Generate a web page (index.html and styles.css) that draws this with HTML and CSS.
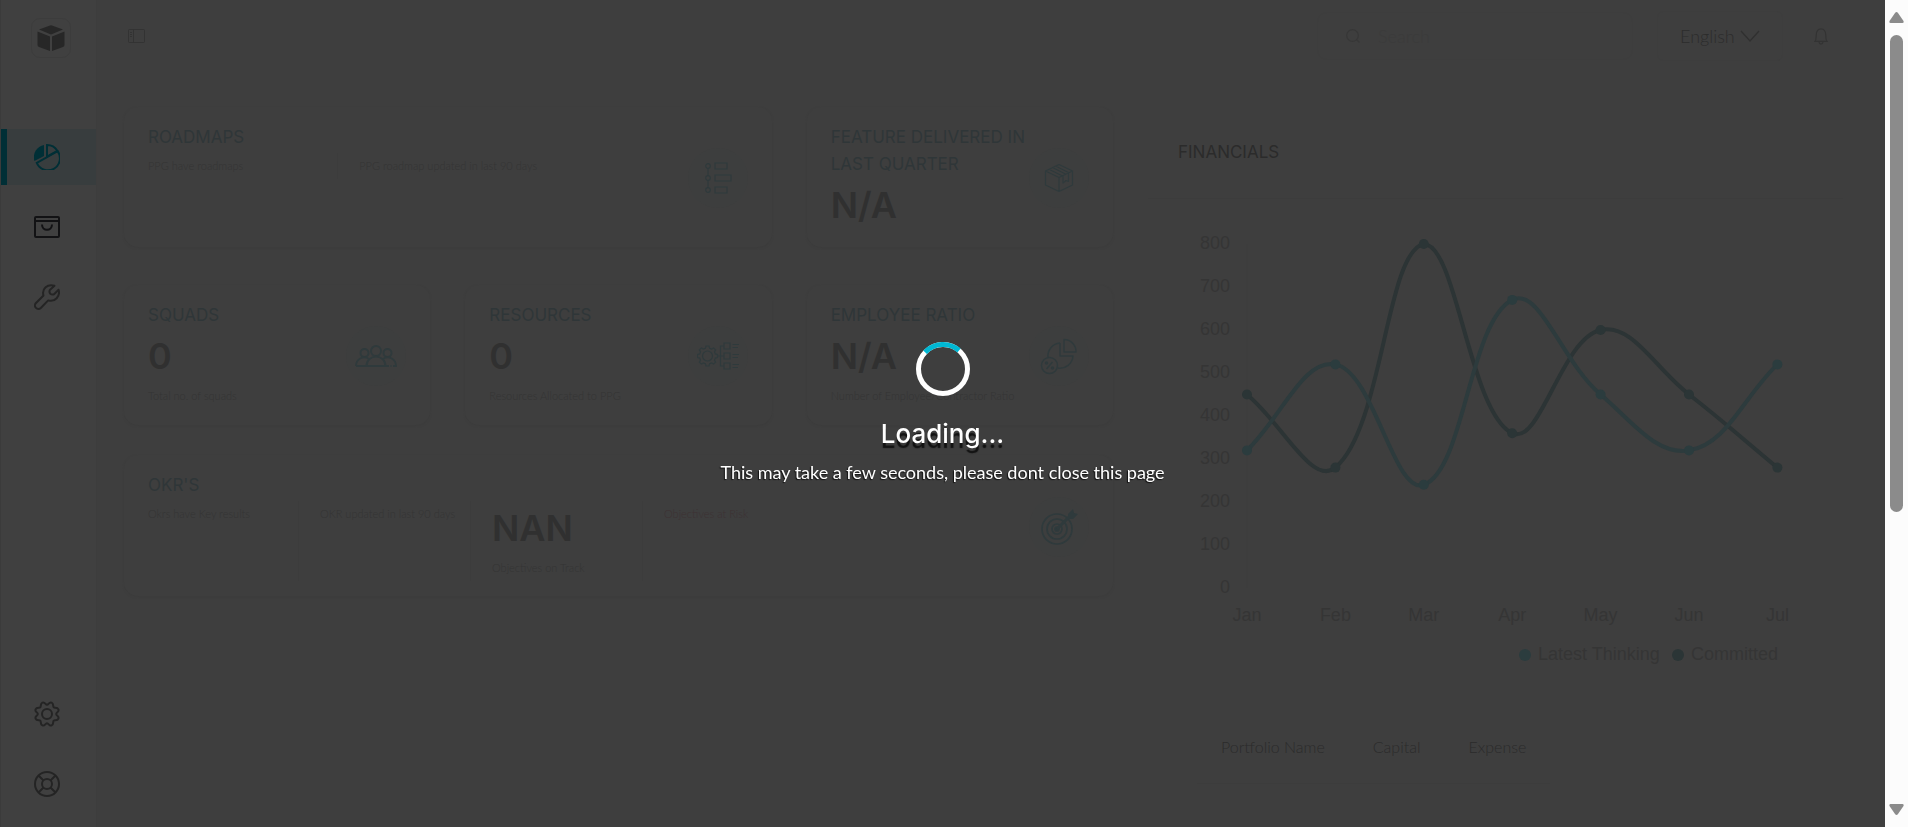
FILE: index.html
```html
<!DOCTYPE html>
<html lang="en">
<head>
<meta charset="utf-8">
<title>Portfolio dashboard</title>
<link rel="stylesheet" href="styles.css">
</head>
<body>
<div class="app">
  <nav class="sidebar" aria-label="Main">
    <a class="logo" href="#" aria-label="Home">
      <svg width="28" height="28" viewBox="0 0 28 28" fill="currentColor"><path d="M2 5.600 13 1.500q1-.4 2 0L26 5.600 14 10.400z"/><path d="M.5 7.600 13 12.400V27L2 23q-1.500-.6-1.500-2z"/><path d="M27.500 7.600 15 12.400V27l11-4q1.500-.6 1.500-2z"/></svg>
    </a>
    <a class="nav-link nav-active" href="#" aria-label="Dashboard">
      <svg width="26" height="26" viewBox="0 0 26 26" fill="none" stroke="currentColor" stroke-width="2"><path d="M10 1v11L.4 17A12.500 12.500 0 0 1 10 1z" fill="currentColor" stroke="none"/><path d="M13 12.500V1a12 12 0 0 1 10.300 5.800z"/><path d="M2.800 18.800 23.600 7.200A12 12 0 1 1 2.800 18.800z"/></svg>
    </a>
    <a class="nav-link" href="#" aria-label="Marketplace">
      <svg class="ink-dark" width="26" height="26" viewBox="0 0 26 26" fill="none" stroke="currentColor" stroke-width="2"><rect x="1" y="3" width="24" height="20" rx="1"/><path d="M1 7h24M8 10.500c0 7 10 7 10 0"/></svg>
    </a>
    <a class="nav-link" href="#" aria-label="Tools">
      <svg width="26" height="26" viewBox="0 0 26 26" fill="none" stroke="currentColor" stroke-width="2" stroke-linejoin="round"><path d="M20.500 1.800C13.500-.5 7.500 5 9.500 11.500L2 19A3.400 3.400 0 0 0 6.800 24l7.400-7.600C21 18.500 26.500 12 24.600 5.800L20 10.300q-2 .8-3.800-.6-1.200-1.700-.4-3.700z"/></svg>
    </a>
    <span class="nav-space"></span>
    <a class="nav-link" href="#" aria-label="Settings">
      <svg width="26" height="26" viewBox="0 0 26 26" fill="none" stroke="currentColor" stroke-width="2"><circle cx="13" cy="13" r="5"/><path id="cog" d="M13 3.800C14.800 3.800 15 .6 17.600 1.600 20.200 2.600 18.500 5.800 19.800 6.200 20.200 7.500 23.400 5.800 24.400 8.400 25.400 11 22.200 11.200 22.200 13"/><use href="#cog" transform="rotate(90 13 13)"/><use href="#cog" transform="rotate(180 13 13)"/><use href="#cog" transform="rotate(270 13 13)"/></svg>
    </a>
    <a class="nav-link" href="#" aria-label="Help">
      <svg width="26" height="26" viewBox="0 0 26 26" fill="none" stroke="currentColor" stroke-width="2"><circle cx="13" cy="13" r="12"/><circle cx="13" cy="13" r="5"/><path d="m4.500 4.500 5 5m7 7 5 5m0-17-5 5m-7 7-5 5"/></svg>
    </a>
  </nav>

  <div class="main">
    <header class="topbar">
      <button class="icon-button" type="button" aria-label="Toggle menu">
        <svg width="18" height="14" viewBox="0 0 18 14" fill="none" stroke="currentColor"><rect x=".5" y=".5" width="16" height="13" rx="1"/><path d="M5.500.5v13M2 3.500h2M2 5.500h2M2 7.500h2"/></svg>
      </button>
      <label class="search">
        <svg width="14" height="14" viewBox="0 0 14 14" fill="none" stroke="currentColor" stroke-width="1.300"><circle cx="6.500" cy="6.500" r="5.800"/><path d="m10.500 10.500 3 3"/></svg>
        <input type="search" placeholder="Search" aria-label="Search">
      </label>
      <label class="language">
        <select aria-label="Language"><option>English</option></select>
        <svg width="20" height="12" viewBox="0 0 20 12" fill="none" stroke="currentColor" stroke-width="1.300"><path d="m1 1 9 10 9-10"/></svg>
      </label>
      <button class="icon-button" type="button" aria-label="Notifications">
        <svg width="14" height="17" viewBox="0 0 14 17" fill="none" stroke="currentColor" stroke-width="1.200"><path d="M1 13.300c1-1 1.200-2 1.200-6.300 0-8.300 9.600-8.300 9.600 0 0 4.300.2 5.300 1.200 6.300zM5 13.800c.5 3 3.500 3 4 0"/></svg>
      </button>
    </header>

    <main class="content">
      <section class="cards">
        <div class="card-row row-first">
          <article class="card card-wide">
            <div class="card-body">
              <h2>Roadmaps</h2>
              <div class="cells cells-two">
                <div class="cell"><p>PPG have roadmaps</p></div>
                <div class="cell"><p>PPG roadmap updated in last 90 days</p></div>
              </div>
            </div>
            <span class="card-icon">
              <svg width="28" height="32" viewBox="0 0 28 32" fill="none" stroke="currentColor" stroke-width="1.200"><circle cx="4" cy="4" r="2.300"/><circle cx="4" cy="16" r="2.300"/><circle cx="4" cy="28" r="2.300"/><path d="M4 6.500v7m0 5v7M11 1h12v6H11zM11 13h16v6H11zM11 25h12v6H11z"/></svg>
            </span>
          </article>
          <article class="card">
            <div class="card-body">
              <h2>Feature delivered in<br>last quarter</h2>
              <strong class="figure">N/A</strong>
            </div>
            <span class="card-icon">
              <svg width="30" height="30" viewBox="0 0 30 30" fill="none" stroke="currentColor" stroke-width="1.200" stroke-linejoin="round"><path d="M15 1.500 28.500 8v14L15 28.500 1.500 22V8zM1.500 8 15 14.500 28.500 8M15 14.500v14M5 6.300 18.500 13m-10-8.500L22 11.200M11.500 3 25 9.700M19 13v7l3-2.500 2.500 1V10.500"/></svg>
            </span>
          </article>
        </div>

        <div class="card-row">
          <article class="card">
            <div class="card-body">
              <h2>Squads</h2>
              <strong class="figure">0</strong>
              <p>Total no. of squads</p>
            </div>
            <span class="card-icon">
              <svg width="42" height="24" viewBox="0 0 42 24" fill="none" stroke="currentColor" stroke-width="1.900"><circle cx="21" cy="7" r="5"/><circle cx="9.500" cy="9" r="4"/><circle cx="32.500" cy="9" r="4"/><path d="M11.500 22c0-12.500 19-12.500 19 0M1 22h33M1 22c0-7 7-10.500 12.500-7.500M28.500 14.500C34 11.500 41 15 41 22h-3M35.500 22h1"/></svg>
            </span>
          </article>
          <article class="card">
            <div class="card-body">
              <h2>Resources</h2>
              <strong class="figure">0</strong>
              <p>Resources Allocated to PPG</p>
            </div>
            <span class="card-icon">
              <svg width="42" height="28" viewBox="0 0 42 28" fill="none" stroke="currentColor" stroke-width="1.200"><circle cx="10.500" cy="14" r="5"/><path d="m9 4 3 0 .6 2.200 2 .8 2-1.100 2 2-1.100 2 .8 2 2.200.6v3l-2.200.6-.8 2 1.100 2-2 2-2-1.100-2 .8L12 24H9l-.6-2.200-2-.8-2 1.100-2-2 1.100-2-.8-2-2.200-.6v-3l2.200-.6.8-2-1.100-2 2-2 2 1.100 2-.8zM20 14h7M27 4h-3.500v20H27M27 1h6v6h-6zM27 11h6v6h-6zM27 21h6v6h-6zM35.500 2.500H42m-6.500 3H41M35.500 12.500H42m-6.500 3H41M35.500 22.500H42m-6.500 3H41"/></svg>
            </span>
          </article>
          <article class="card">
            <div class="card-body">
              <h2>Employee ratio</h2>
              <strong class="figure">N/A</strong>
              <p>Number of Employee/Contractor Ratio</p>
            </div>
            <span class="card-icon">
              <svg width="38" height="38" viewBox="0 0 38 38" fill="none" stroke="currentColor" stroke-width="1.500" stroke-linejoin="round"><path d="M24 2.500A12 12 0 0 1 36 15H24zM20 6a13 13 0 0 0-12 14.500M20 6v13h13a13 13 0 0 1-15 12"/><circle cx="9.500" cy="28.500" r="8"/><path d="m6.500 32 6-7"/><circle cx="6.500" cy="26" r="1"/><circle cx="12.500" cy="31" r="1"/></svg>
            </span>
          </article>
        </div>

        <div class="card-row">
          <article class="card card-wide">
            <div class="card-body">
              <h2>OKR's</h2>
              <div class="cells cells-four">
                <div class="cell"><p>Okrs have Key results</p></div>
                <div class="cell"><p>OKR updated in last 90 days</p></div>
                <div class="cell"><strong class="figure">NAN</strong><p>Objectives on Track</p></div>
                <div class="cell cell-risk"><p>Objectives at Risk</p></div>
              </div>
            </div>
            <span class="card-icon">
              <svg width="38" height="38" viewBox="0 0 38 38" fill="none" stroke="currentColor" stroke-width="1.700"><circle cx="17" cy="21" r="15"/><circle cx="17" cy="21" r="10"/><circle cx="17" cy="21" r="5"/><circle cx="17" cy="21" r="2" fill="currentColor"/><path d="m17 21 14-14" stroke-width="3"/><path d="m28 6 5-5 1 4 4 1-5 5-5 0z" fill="currentColor" stroke="none"/></svg>
            </span>
          </article>
        </div>
      </section>

      <section class="finance">
        <h2>Financials</h2>
        <svg id="chart" class="chart" viewBox="0 0 695 494" role="img" aria-label="Latest thinking and committed spend by month"></svg>
        <table class="portfolio">
          <thead><tr><th scope="col">Portfolio Name</th><th scope="col">Capital</th><th scope="col">Expense</th></tr></thead>
        </table>
      </section>
    </main>
  </div>

  <div class="scrollbar" aria-hidden="true">
    <svg width="15" height="11" viewBox="0 0 15 11" fill="currentColor"><path d="M6 1q1.500-2 3 0l5.500 8q.5 2-1 2h-12q-1.500 0-1-2z"/></svg>
    <span class="track"><span class="thumb"></span></span>
    <svg width="15" height="11" viewBox="0 0 15 11" fill="currentColor"><path d="M6 10q1.500 2 3 0l5.500-8q.5-2-1-2h-12Q0 0 .5 2z"/></svg>
  </div>
</div>

<div class="loader" role="status">
  <svg class="spinner" width="54" height="54" viewBox="0 0 54 54" fill="none" stroke-width="5"><circle cx="27" cy="27" r="24.500" stroke="#fff"/><path d="M9.100 10.300A24.500 24.500 0 0 1 43 8.500" stroke="#00b8d4"/></svg>
  <p class="loader-title">Loading...</p>
  <p class="loader-text">This may take a few seconds, please dont close this page</p>
</div>
<script src="chart.js"></script>
</body>
</html>
```
FILE: styles.css
```css
* { box-sizing: border-box; }

body {
  margin: 0;
  background: #3e3e3e;
  color: #303030;
  font-family: Lato, sans-serif;
}

h2, p { margin: 0; }

svg { display: block; flex: none; }

.app {
  display: flex;
  height: 100vh;
  overflow: hidden;
}

/* Sidebar */
.sidebar {
  display: flex;
  flex-direction: column;
  flex: none;
  gap: 14px;
  width: 97px;
  padding: 18px 0 15px;
  border-left: 1px solid #3b3b3b;
  border-right: 1px solid #3d3d3d;
  background: #404040;
}

.logo {
  display: grid;
  place-items: center;
  width: 40px;
  height: 40px;
  margin: 0 0 57px 30px;
  border: 1px solid #3c3c3c;
  border-radius: 9px;
  color: #272727;
}

.nav-link {
  display: flex;
  align-items: center;
  height: 56px;
  padding-left: 27px;
  border-left: 6px solid transparent;
  color: #242424;
}

.nav-active {
  border-left-color: #002f36;
  background: #383d3e;
  color: #002f36;
}

.ink-dark { color: #121214; }

.nav-space { flex: 1; }

/* Top bar */
.main {
  flex: 1;
  min-width: 0;
}

.topbar {
  display: flex;
  align-items: center;
  gap: 24px;
  height: 72px;
  padding: 0 57px 0 31px;
}

.icon-button {
  padding: 0;
  border: 0;
  background: none;
  color: #333;
}

.topbar > .icon-button:first-child { margin-right: auto; }

.search {
  display: flex;
  align-items: center;
  gap: 18px;
  width: 316px;
  height: 48px;
  padding: 0 28px;
  border: 1px solid #3d3d3d;
  border-radius: 10px;
  color: #373737;
}

.search input {
  width: 100%;
  padding: 0;
  border: 0;
  background: none;
  color: inherit;
  font: 300 18px Lato, sans-serif;
}

.search input::placeholder { color: #3b3b3b; opacity: 1; }

.language {
  display: flex;
  align-items: center;
  gap: 5px;
  height: 50px;
  margin-right: 7px;
  padding: 0 22px;
  border: 1px solid #3d3d3d;
  border-radius: 6px;
  color: #303030;
}

.language select {
  padding: 0;
  border: 0;
  appearance: none;
  background: none;
  color: #2c2c2c;
  font: 300 18px Lato, sans-serif;
}

/* Summary cards */
.content {
  display: flex;
  gap: 35px;
  padding: 35px 42px 0 27px;
}

.cards {
  display: flex;
  flex: 989 1 0;
  flex-direction: column;
  gap: 30px;
  min-width: 0;
}

.card-row {
  display: grid;
  grid-template-columns: repeat(3, minmax(0, 1fr));
  gap: 35px;
}

.row-first { margin-bottom: 8px; }

.row-first .card-wide { grid-column: span 2; }

.card-row > .card-wide:only-child { grid-column: 1 / -1; }

.card {
  display: flex;
  align-items: center;
  min-height: 140px;
  padding: 17px 24px 15px;
  border-radius: 14px;
  box-shadow: 0 1px 2px #3c3c3c;
  background: #3e3e3e;
}

.card-body {
  flex: 1;
  align-self: stretch;
  min-width: 0;
}

.card h2, .finance h2 {
  font: 400 17px/27px Inter, sans-serif;
  text-transform: uppercase;
  white-space: nowrap;
}

.card h2 { color: #2f3638; }

.card p {
  color: #343434;
  font-size: 11px;
  font-weight: 300;
  line-height: 26px;
  white-space: nowrap;
}

.figure {
  display: block;
  color: #303030;
  font: 600 36px/54px Inter, sans-serif;
}

.card-icon {
  display: grid;
  flex: none;
  place-items: center;
  width: 60px;
  height: 60px;
  border-radius: 50%;
  background: #3d3e3e;
  color: #2f3a3c;
}

.cells {
  display: grid;
  padding-top: 2px;
}

.cells-two { grid-template-columns: 189fr 350fr; }

.cells-four { grid-template-columns: 150fr 172fr 172fr 387fr; }

.cell + .cell {
  padding-left: 21px;
  border-left: 1px solid #3c3c3c;
}

.card .cell-risk p { color: #3d3133; }

/* Financials */
.finance {
  flex: 695 1 0;
  min-width: 0;
}

.finance h2 {
  padding: 32px 30px;
  border-bottom: 1px solid #3c3c3c;
  color: #2b2b2b;
}

.chart { width: 100%; }

.chart text {
  fill: #353535;
  font: 18px "Liberation Sans", Arial, sans-serif;
}

.chart path { fill: none; stroke-width: 4; }

.stroke-light { stroke: #2d3b3d; }
.stroke-dark { stroke: #2c3435; }
.fill-light { fill: #2b3c3e; }
.fill-dark { fill: #2b3536; }
.axis { stroke: #3c3c3c; }

.portfolio {
  margin-left: 49px;
  border-bottom: 1px solid #3c3c3c;
  border-collapse: collapse;
}

.portfolio th {
  padding: 36px 24px 18px;
  color: #2b2b2b;
  font-size: 16px;
  font-weight: 300;
  line-height: 36px;
  text-align: left;
}

/* Page scrollbar */
.scrollbar {
  display: flex;
  flex: none;
  flex-direction: column;
  align-items: center;
  gap: 12px;
  width: 23px;
  padding: 12px 0;
  background: #fcfcfc;
  color: #8b8b8b;
}

.track { flex: 1; }

.thumb {
  display: block;
  width: 13px;
  height: 63%;
  border-radius: 7px;
  background: #8b8b8b;
}

/* Loading overlay */
.loader {
  position: fixed;
  inset: 0 23px 0 0;
  display: flex;
  flex-direction: column;
  align-items: center;
  justify-content: center;
  color: #fff;
}

.loader-title {
  margin-top: 17px;
  font: 500 26px/42px Inter, sans-serif;
  text-shadow: 0 5px 1px #111;
}

.loader-text {
  margin-top: 3px;
  font-size: 18px;
  line-height: 28px;
  text-shadow: -1px 1px 1px #111;
}
```
FILE: chart.js
```js
const svg = document.getElementById("chart");
const months = ["Jan", "Feb", "Mar", "Apr", "May", "Jun", "Jul"];
const committed = [450, 280, 800, 360, 600, 450, 280];
const latest = [320, 520, 240, 670, 450, 320, 520];
const left = 99, top0 = 45, step = 88.4, bottom = 389;

const xOf = i => left + i * step;
const yOf = v => bottom - v * (bottom - top0) / 800;

function add(tag, attrs, text) {
  const el = document.createElementNS("http://www.w3.org/2000/svg", tag);
  for (const key in attrs) el.setAttribute(key, attrs[key]);
  if (text) el.textContent = text;
  svg.appendChild(el);
}

// Smooth line with control points weighted by neighbour distance.
function curve(values) {
  const pts = values.map((v, i) => [xOf(i), yOf(v)]);
  const clamp = y => Math.min(bottom, Math.max(top0, y));
  const cps = pts.map((p, i) => {
    const a = pts[i - 1] || p, b = pts[i + 1] || p;
    const d1 = Math.hypot(p[0] - a[0], p[1] - a[1]);
    const d2 = Math.hypot(b[0] - p[0], b[1] - p[1]);
    const f1 = 0.4 * d1 / (d1 + d2), f2 = 0.4 * d2 / (d1 + d2);
    return [
      [p[0] - f1 * (b[0] - a[0]), clamp(p[1] - f1 * (b[1] - a[1]))],
      [p[0] + f2 * (b[0] - a[0]), clamp(p[1] + f2 * (b[1] - a[1]))]
    ];
  });
  let d = "M" + pts[0];
  for (let i = 1; i < pts.length; i++) d += "C" + cps[i - 1][1] + " " + cps[i][0] + " " + pts[i];
  return d;
}

add("line", { x1: left, x2: left, y1: top0, y2: bottom, class: "axis" });
for (let v = 0; v <= 800; v += 100) {
  add("text", { x: left - 17, y: yOf(v) + 5, "text-anchor": "end" }, String(v));
}
months.forEach((m, i) => add("text", { x: xOf(i), y: 422, "text-anchor": "middle" }, m));

[[committed, "dark"], [latest, "light"]].forEach(([values, tone]) => {
  add("path", { d: curve(values), class: "stroke-" + tone });
  values.forEach((v, i) => add("circle", { cx: xOf(i), cy: yOf(v), r: 5, class: "fill-" + tone }));
});

add("circle", { cx: 377, cy: 456, r: 6, class: "fill-light" });
add("text", { x: 390, y: 461 }, "Latest Thinking");
add("circle", { cx: 530, cy: 456, r: 6, class: "fill-dark" });
add("text", { x: 543, y: 461 }, "Committed");
```
